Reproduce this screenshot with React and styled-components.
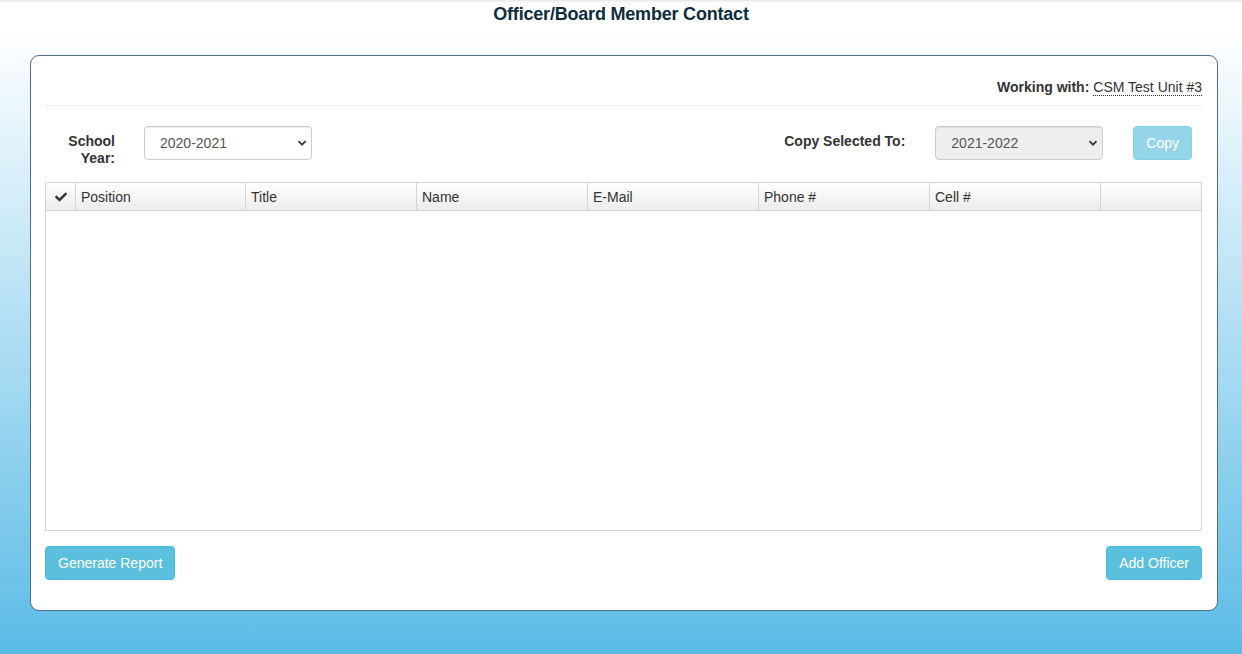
import React from "react";
import styled, { createGlobalStyle } from "styled-components";
import { FaCheck } from "react-icons/fa";

const GlobalStyle = createGlobalStyle`
  html, body { margin: 0; padding: 0; }
  body {
    font-family: "Liberation Sans", Arial, sans-serif;
    font-size: 14px;
    color: #333;
    min-height: 654px;
    background: linear-gradient(to bottom, #ffffff 0px, #ffffff 30px, #5bbbe6 654px);
  }
`;

const Page = styled.div`
  min-height: 654px;
  display: flex;
  flex-direction: column;
`;

const Header = styled.header`
  height: 28px;
  display: flex;
  align-items: center;
  justify-content: center;
  box-shadow: inset 0 3px 3px -2px rgba(0, 0, 0, 0.12);
`;

const Title = styled.h1`
  margin: 0;
  font-size: 18px;
  font-weight: bold;
  color: #0e2d3c;
  letter-spacing: -0.2px;
`;

const Card = styled.section`
  margin: 27px 0 0 30px;
  width: 1188px;
  box-sizing: border-box;
  background: #fff;
  border: 1px solid #4a6d8c;
  border-radius: 9px;
  padding: 15px 15px 30px 14px;
`;

const WorkingRow = styled.div`
  display: flex;
  justify-content: flex-end;
  line-height: 20px;
  padding: 6px 0 8px;
  border-bottom: 1px solid #eee;
`;

const WorkingLabel = styled.span`
  font-weight: bold;
  margin-right: 4px;
`;

const UnitLink = styled.span`
  border-bottom: 1px dotted #333;
  line-height: 16px;
  align-self: center;
`;

const FormRow = styled.div`
  display: flex;
  align-items: flex-start;
  margin-top: 20px;
  height: 34px;
`;

const Label = styled.label`
  font-weight: bold;
  text-align: right;
  line-height: 17px;
  padding-top: 7px;
  width: ${(p) => p.$w}px;
  margin-right: ${(p) => p.$mr}px;
`;

const Select = styled.select`
  appearance: none;
  -webkit-appearance: none;
  width: 168px;
  height: 34px;
  box-sizing: border-box;
  padding: 0 12px 0 15px;
  font-family: "Liberation Sans", Arial, sans-serif;
  font-size: 14px;
  color: #555;
  border: 1px solid #ccc;
  border-radius: 4px;
  background-color: ${(p) => (p.disabled ? "#eee" : "#fff")};
  background-image: url("data:image/svg+xml,%3Csvg xmlns='http://www.w3.org/2000/svg' width='10' height='10' viewBox='0 0 10 10'%3E%3Cpath d='M1.5 3.2 L5 6.7 L8.5 3.2' fill='none' stroke='%23333' stroke-width='1.7'/%3E%3C/svg%3E");
  background-repeat: no-repeat;
  background-position: right 4px center;
  box-shadow: inset 0 1px 1px rgba(0, 0, 0, 0.075);
  opacity: 1;
`;

const Spacer = styled.div`
  flex: 1;
`;

const Button = styled.button`
  height: 34px;
  box-sizing: border-box;
  padding: 0 12px;
  font-family: "Liberation Sans", Arial, sans-serif;
  font-size: 14px;
  color: #fff;
  background: #5bc0de;
  border: 1px solid #46b8da;
  border-radius: 4px;
  opacity: ${(p) => (p.disabled ? 0.65 : 1)};
  margin-left: ${(p) => p.$ml || 0}px;
  margin-right: ${(p) => p.$mr || 0}px;
`;

const Table = styled.div`
  margin-top: 22px;
  height: 349px;
  box-sizing: border-box;
  border: 1px solid #d4d4d4;
  display: flex;
  flex-direction: column;
`;

const HeaderRow = styled.div`
  display: grid;
  grid-template-columns: 29px 170px repeat(5, 171px) 1fr;
  height: 28px;
  box-sizing: border-box;
  background: linear-gradient(to bottom, #ffffff, #ececec);
  border-bottom: 1px solid #d4d4d4;
`;

const HeadCell = styled.div`
  display: flex;
  align-items: center;
  justify-content: ${(p) => (p.$center ? "center" : "flex-start")};
  padding-left: ${(p) => (p.$center ? 0 : 5)}px;
  border-left: ${(p) => (p.$first ? "none" : "1px solid #d4d4d4")};
  color: #333;
  font-size: 14px;
`;

const Body = styled.div`
  flex: 1;
  background: #fff;
`;

const Footer = styled.div`
  display: flex;
  justify-content: space-between;
  margin-top: 15px;
`;

const columns = ["Position", "Title", "Name", "E-Mail", "Phone #", "Cell #", ""];

export default function App() {
  return (
    <>
      <GlobalStyle />
      <Page>
        <Header>
          <Title>Officer/Board Member Contact</Title>
        </Header>
        <Card>
          <WorkingRow>
            <WorkingLabel>Working with:</WorkingLabel>
            <UnitLink>CSM Test Unit #3</UnitLink>
          </WorkingRow>
          <FormRow>
            <Label $w={70} $mr={29}>
              School
              <br />
              Year:
            </Label>
            <Select defaultValue="2020-2021">
              <option>2020-2021</option>
            </Select>
            <Spacer />
            <Label $w={140} $mr={30}>
              Copy Selected To:
            </Label>
            <Select disabled defaultValue="2021-2022">
              <option>2021-2022</option>
            </Select>
            <Button disabled $ml={30} $mr={10}>
              Copy
            </Button>
          </FormRow>
          <Table>
            <HeaderRow>
              <HeadCell $first $center>
                <FaCheck size={12} color="#333" />
              </HeadCell>
              {columns.map((c, i) => (
                <HeadCell key={i}>{c}</HeadCell>
              ))}
            </HeaderRow>
            <Body />
          </Table>
          <Footer>
            <Button>Generate Report</Button>
            <Button>Add Officer</Button>
          </Footer>
        </Card>
      </Page>
    </>
  );
}
